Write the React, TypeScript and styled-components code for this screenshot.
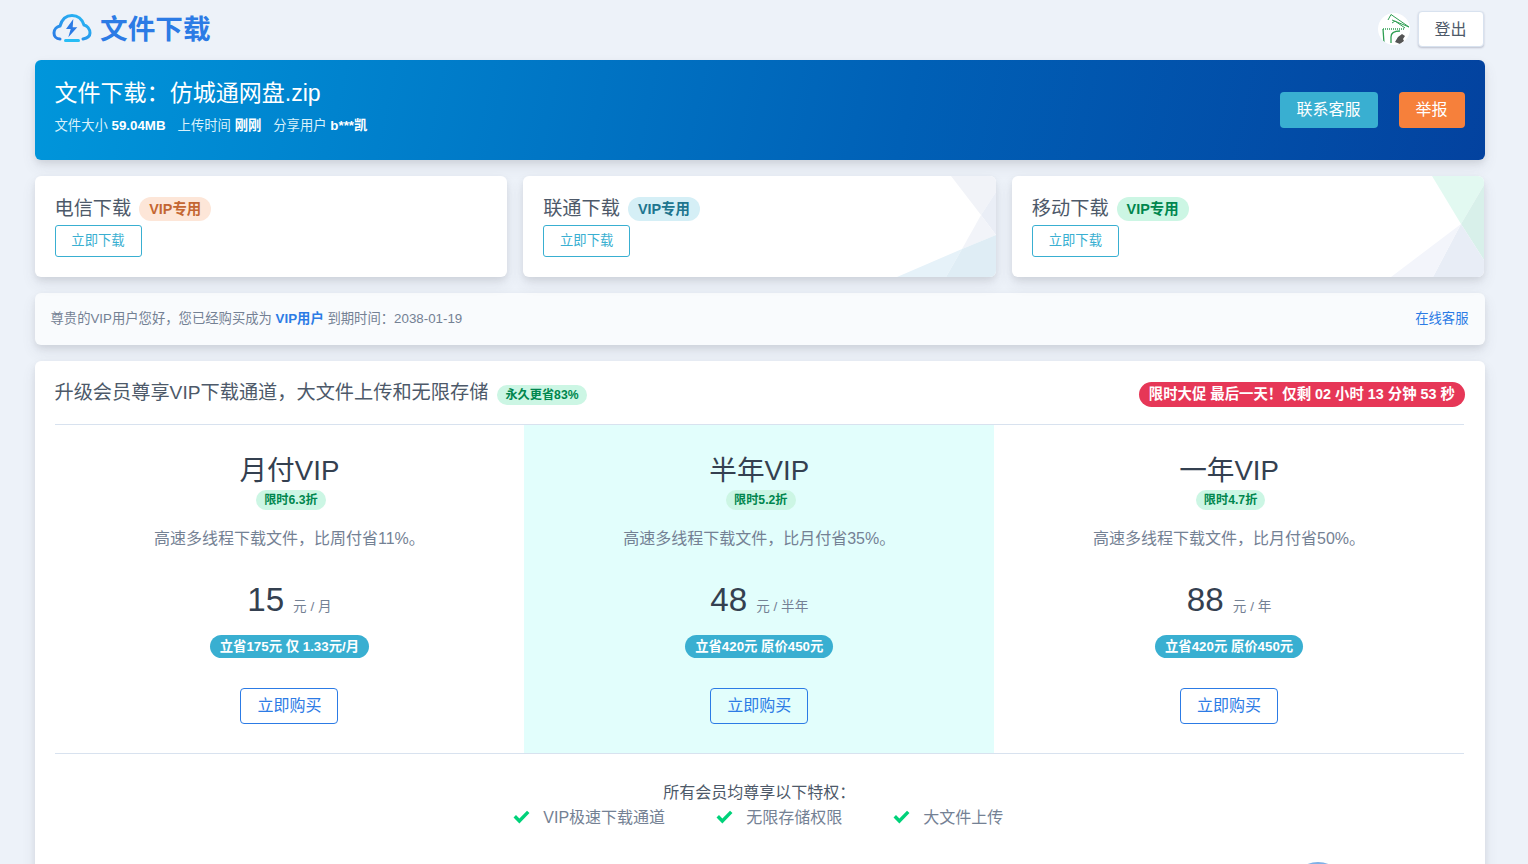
import styled, { createGlobalStyle } from "styled-components";

const GlobalStyle = createGlobalStyle`
  html, body {
    margin: 0;
    height: 864px;
    overflow: hidden;
    background: #edf2f9;
    font-family: "Liberation Sans", "Noto Sans CJK SC", sans-serif;
    color: #3b506c;
    font-size: 13.33px;
  }
  * { box-sizing: border-box; }
`;

const Page = styled.div`
  width: 1528px;
  height: 864px;
  overflow: hidden;
  padding: 0 43.5px 0 34.5px;
  display: flex;
  flex-direction: column;
  gap: 16px;
`;

const Header = styled.header`
  height: 44px;
  display: flex;
  align-items: center;
  justify-content: space-between;
  padding: 14px 0 0 17.5px;
`;

const Brand = styled.div`
  display: flex;
  align-items: center;
  gap: 8px;
  font-size: 27.65px;
  font-weight: 700;
  color: #2c7be5;
`;

const BrandName = styled.span`
  padding-bottom: 4px;
`;

const HeaderRight = styled.div`
  display: flex;
  align-items: center;
  gap: 8px;
  margin-right: 1px;
`;

const Avatar = styled.svg`
  width: 32px;
  height: 32px;
  border-radius: 50%;
  background: #fff;
`;

const LogoutButton = styled.button`
  width: 66px;
  height: 36px;
  padding: 0 0 3px;
  border: 1px solid #d8e2ef;
  border-radius: 4px;
  background: #fff;
  box-shadow: 0 1px 2px rgba(43, 45, 80, 0.25);
  font: inherit;
  font-size: 16px;
  color: #4d5969;
`;

const Hero = styled.section`
  height: 100px;
  padding: 0 20px;
  display: flex;
  align-items: center;
  justify-content: space-between;
  border-radius: 6px;
  background: linear-gradient(102deg, #0096db 0%, #0060b6 60%, #03429f 100%);
  box-shadow: 0 7px 14px rgba(65, 69, 88, 0.1), 0 3px 6px rgba(0, 0, 0, 0.07);
  color: #fff;
`;

const HeroText = styled.div`
  padding-bottom: 9px;
`;

const HeroTitle = styled.h1`
  margin: 0 0 6px;
  font-size: 23.04px;
  line-height: 34px;
  font-weight: 400;
`;

const HeroMeta = styled.div`
  display: flex;
  gap: 12px;
  font-size: 13.33px;
  line-height: 20px;
  color: #d9f1fb;
  b {
    font-weight: 700;
    color: #fff;
  }
`;

const HeroActions = styled.div`
  display: flex;
  gap: 21px;
`;

const SolidButton = styled.button<{ $bg: string; $w: number }>`
  width: ${(p) => p.$w}px;
  height: 36px;
  padding: 0 0 5px;
  border: 0;
  border-radius: 4px;
  background: ${(p) => p.$bg};
  color: #fff;
  font: inherit;
  font-size: 16px;
`;

const CardRow = styled.div`
  display: grid;
  grid-template-columns: repeat(3, 1fr);
  gap: 16px;
`;

const Card = styled.div`
  position: relative;
  height: 101px;
  padding: 20px 20px 0;
  border-radius: 6px;
  background: #fff;
  overflow: hidden;
  box-shadow: 0 7px 14px rgba(65, 69, 88, 0.1), 0 3px 6px rgba(0, 0, 0, 0.07);
`;

const CardCorner = styled.svg`
  position: absolute;
  right: 0;
  top: 0;
  width: 100px;
  height: 101px;
`;

const CardTitle = styled.div`
  display: flex;
  align-items: center;
  gap: 8px;
  height: 26px;
  font-size: 19.2px;
  line-height: 26px;
  color: #4d5969;
  margin-bottom: 3px;
`;

const Pill = styled.span<{ $bg: string; $fg: string }>`
  display: inline-block;
  padding: 0 10px;
  height: 24px;
  line-height: 24px;
  border-radius: 12px;
  background: ${(p) => p.$bg};
  color: ${(p) => p.$fg};
  font-size: 14.4px;
  font-weight: 700;
`;

const DownloadButton = styled.button`
  display: block;
  width: 87px;
  height: 32px;
  padding: 0 0 3px;
  border: 1px solid #39afd1;
  border-radius: 3px;
  background: transparent;
  color: #39afd1;
  font: inherit;
  font-size: 13.33px;
`;

const Notice = styled.div`
  height: 52px;
  padding: 0 16px 4px;
  display: flex;
  align-items: center;
  justify-content: space-between;
  border-radius: 6px;
  background: #f9fbfd;
  color: #748194;
  font-size: 13.33px;
  box-shadow: 0 7px 14px rgba(65, 69, 88, 0.1), 0 3px 6px rgba(0, 0, 0, 0.07);
  b { color: #2c7be5; }
  a { color: #2c7be5; }
`;

const Main = styled.section`
  position: relative;
  flex: 1;
  margin-bottom: -40px;
  padding: 0 20.5px 0 20px;
  border-radius: 6px 6px 0 0;
  background: #fff;
  box-shadow: 0 7px 14px rgba(65, 69, 88, 0.1), 0 3px 6px rgba(0, 0, 0, 0.07);
`;

const MainHead = styled.div`
  height: 64px;
  display: flex;
  align-items: center;
  justify-content: space-between;
  border-bottom: 1px solid #d8e2ef;
`;

const MainTitle = styled.div`
  display: flex;
  align-items: center;
  gap: 9px;
  padding-bottom: 4px;
  font-size: 19.2px;
  color: #4d5969;
`;

const SmallPill = styled(Pill)`
  height: 20px;
  line-height: 20px;
  padding: 0 8px;
  font-size: 12.2px;
`;

const HeadPill = styled(SmallPill)`
  margin-top: 8px;
`;

const PlanPill = styled(SmallPill)`
  margin-left: 3px;
`;

const PromoPill = styled.span`
  height: 25px;
  line-height: 25px;
  margin: 4px -1px 0 0;
  padding: 0 10px;
  border-radius: 13px;
  background: #e63757;
  color: #fff;
  font-size: 14.4px;
  font-weight: 700;
`;

const PlanGrid = styled.div`
  display: grid;
  grid-template-columns: repeat(3, 1fr);
  height: 329px;
  border-bottom: 1px solid #d8e2ef;
`;

const Plan = styled.div<{ $active?: boolean }>`
  display: flex;
  flex-direction: column;
  align-items: center;
  padding-top: 28px;
  background: ${(p) => (p.$active ? "#e2fefc" : "transparent")};
`;

const PlanName = styled.h3`
  margin: 0 0 1px;
  font-size: 27.65px;
  line-height: 36px;
  font-weight: 400;
  color: #344050;
`;

const PlanDesc = styled.p`
  margin: 17px 0 0;
  font-size: 16px;
  line-height: 24px;
  color: #748194;
`;

const PriceRow = styled.div`
  margin-top: 26px;
  height: 46px;
  display: flex;
  align-items: baseline;
  gap: 9px;
  color: #344050;
  font-size: 33.18px;
  line-height: 46px;
`;

const PriceUnit = styled.span`
  font-size: 13.6px;
  color: #748194;
`;

const SavePill = styled(Pill)`
  margin-top: 12px;
  height: 23px;
  line-height: 23px;
  font-size: 13.33px;
`;

const BuyButton = styled.button`
  margin-top: 30px;
  width: 98px;
  height: 36px;
  padding: 0 0 4px;
  border: 1px solid #2c7be5;
  border-radius: 4px;
  background: transparent;
  color: #2c7be5;
  font: inherit;
  font-size: 16px;
`;

const Perks = styled.div`
  padding-top: 27px;
  text-align: center;
  font-size: 16px;
  line-height: 24px;
  color: #4d5969;
`;

const PerkRow = styled.div`
  display: flex;
  justify-content: center;
  gap: 51px;
  padding: 1px 2px 0 0;
  color: #748194;
`;

const Perk = styled.span`
  display: flex;
  align-items: center;
  gap: 13px;
`;

const GreenCheck = styled.svg`
  width: 17px;
  height: 15px;
  margin-top: -3px;
  fill: #00d27a;
`;

const BottomBubble = styled.div`
  position: absolute;
  left: 1255px;
  top: 501px;
  width: 56px;
  height: 56px;
  border-radius: 50%;
  background: #7fb0e6;
`;

const plans = [
  { name: "月付VIP", off: "限时6.3折", desc: "高速多线程下载文件，比周付省11%。", price: "15", unit: "元 / 月", save: "立省175元 仅 1.33元/月" },
  { name: "半年VIP", off: "限时5.2折", desc: "高速多线程下载文件，比月付省35%。", price: "48", unit: "元 / 半年", save: "立省420元 原价450元", active: true },
  { name: "一年VIP", off: "限时4.7折", desc: "高速多线程下载文件，比月付省50%。", price: "88", unit: "元 / 年", save: "立省420元 原价450元" },
];

const lines = [
  { name: "电信下载", bg: "#fde6d8", fg: "#c46632", shards: [] },
  {
    name: "联通下载",
    bg: "#d5eff6",
    fg: "#20758e",
    shards: [
      { d: "M55 0H100V16L85 39z", fill: "#f1f3f8" },
      { d: "M85 39L100 16V59z", fill: "#eaeef6" },
      { d: "M85 39L100 59L66 73z", fill: "#f2f4f9" },
      { d: "M1 101L66 73L50 101z", fill: "#e6f2f9" },
      { d: "M66 73L100 59V101H50z", fill: "#dfedf5" },
    ],
  },
  {
    name: "移动下载",
    bg: "#ccf6e4",
    fg: "#00864e",
    shards: [
      { d: "M48 0H100V9L77 48z", fill: "#e2f9f1" },
      { d: "M77 48L100 9V84z", fill: "#d8f0ea" },
      { d: "M77 48L100 84V101H49z", fill: "#e8edf6" },
      { d: "M7 101L77 48L49 101z", fill: "#f3f5fb" },
    ],
  },
];

function Logo() {
  return (
    <svg width="40" height="32" viewBox="0 0 40 32" fill="none">
      <defs>
        <linearGradient id="cloud" x1="0" y1="1" x2="1" y2="0">
          <stop offset="0" stopColor="#2c7be5" />
          <stop offset="1" stopColor="#27bdf5" />
        </linearGradient>
      </defs>
      <path d="M8 26C4 26 2 23 2 20C2 16 5 13.5 8 13C10 6 14 2.5 20 2.5C26 2.5 30 6 32 12C35 12.5 38 16 38 20C38 23 36 25 31 26" stroke="url(#cloud)" strokeWidth="3" strokeLinecap="round" />
      <path d="M21.3 6L14 16H18.7L16.3 24.3L25.3 14.3H20.7z" fill="#2c7be5" />
      <rect x="12" y="26" width="16" height="3" rx="1.5" fill="#27bdf5" />
    </svg>
  );
}

function HouseAvatar() {
  return (
    <Avatar viewBox="0 0 32 32" fill="none">
      <path d="M10 7L13 1.5L31 14L14 7" stroke="#2f9e53" strokeWidth="1" />
      <path d="M14 10L17 8L27 15" stroke="#2f9e53" strokeWidth="1" />
      <path d="M5 16H27" stroke="#2f9e53" strokeWidth="1.5" strokeDasharray="1 1" />
      <path d="M5 16L6 30M13 30V24C13 20 17 18 22 18" stroke="#2f9e53" strokeWidth="1.3" />
      <path d="M17 29L20 24L24 21L27 23L25 26L26 28L22 31z" fill="#555" />
    </Avatar>
  );
}

export default function App() {
  return (
    <>
      <GlobalStyle />
      <Page>
        <Header>
          <Brand>
            <Logo />
            <BrandName>文件下载</BrandName>
          </Brand>
          <HeaderRight>
            <HouseAvatar />
            <LogoutButton>登出</LogoutButton>
          </HeaderRight>
        </Header>
        <Hero>
          <HeroText>
            <HeroTitle>文件下载：仿城通网盘.zip</HeroTitle>
            <HeroMeta>
              <span>文件大小 <b>59.04MB</b></span>
              <span>上传时间 <b>刚刚</b></span>
              <span>分享用户 <b>b***凯</b></span>
            </HeroMeta>
          </HeroText>
          <HeroActions>
            <SolidButton $bg="#39afd1" $w={98}>联系客服</SolidButton>
            <SolidButton $bg="#f6803b" $w={66}>举报</SolidButton>
          </HeroActions>
        </Hero>
        <CardRow>
          {lines.map((l) => (
            <Card key={l.name}>
              {l.shards.length > 0 && (
                <CardCorner viewBox="0 0 100 101" preserveAspectRatio="none">
                  {l.shards.map((s) => (
                    <path key={s.d} d={s.d} fill={s.fill} />
                  ))}
                </CardCorner>
              )}
              <CardTitle>
                {l.name}
                <Pill $bg={l.bg} $fg={l.fg}>VIP专用</Pill>
              </CardTitle>
              <DownloadButton>立即下载</DownloadButton>
            </Card>
          ))}
        </CardRow>
        <Notice>
          <span>尊贵的VIP用户您好，您已经购买成为 <b>VIP用户</b> 到期时间：2038-01-19</span>
          <a>在线客服</a>
        </Notice>
        <Main>
          <MainHead>
            <MainTitle>
              升级会员尊享VIP下载通道，大文件上传和无限存储
              <HeadPill $bg="#ccf6e4" $fg="#00864e">永久更省83%</HeadPill>
            </MainTitle>
            <PromoPill>限时大促 最后一天！仅剩 02 小时 13 分钟 53 秒</PromoPill>
          </MainHead>
          <PlanGrid>
            {plans.map((p) => (
              <Plan key={p.name} $active={p.active}>
                <PlanName>{p.name}</PlanName>
                <PlanPill $bg="#ccf6e4" $fg="#00864e">{p.off}</PlanPill>
                <PlanDesc>{p.desc}</PlanDesc>
                <PriceRow>
                  {p.price}
                  <PriceUnit>{p.unit}</PriceUnit>
                </PriceRow>
                <SavePill $bg="#39afd1" $fg="#fff">{p.save}</SavePill>
                <BuyButton>立即购买</BuyButton>
              </Plan>
            ))}
          </PlanGrid>
          <Perks>
            <div>所有会员均尊享以下特权：</div>
            <PerkRow>
              {["VIP极速下载通道", "无限存储权限", "大文件上传"].map((t) => (
                <Perk key={t}>
                  <GreenCheck viewBox="0 0 16 14">
                    <path d="M6 13.5L0.5 8l2.3-2.3L6 8.9 13.2 1.5 15.5 3.8z" />
                  </GreenCheck>
                  {t}
                </Perk>
              ))}
            </PerkRow>
          </Perks>
          <BottomBubble />
        </Main>
      </Page>
    </>
  );
}
